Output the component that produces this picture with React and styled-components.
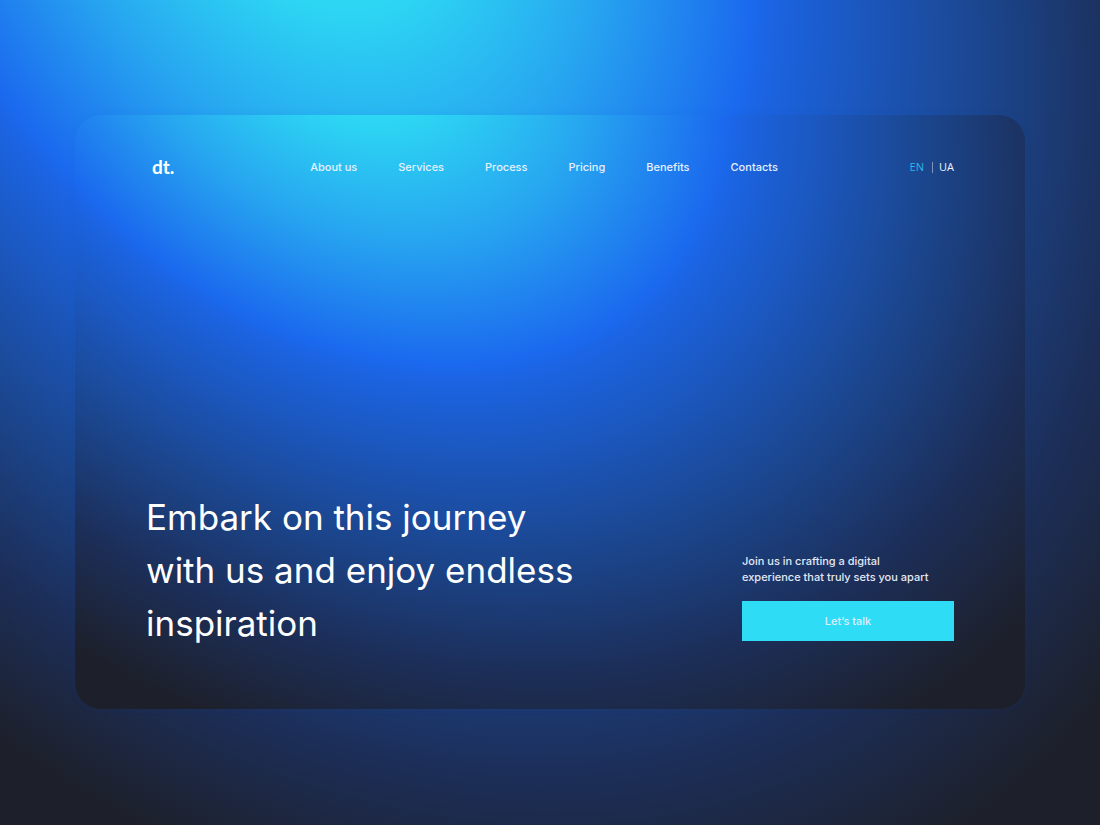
import React, { useId } from "react";
import styled, { createGlobalStyle } from "styled-components";

const GlobalStyle = createGlobalStyle`
  *, *::before, *::after { box-sizing: border-box; }
  body {
    margin: 0;
    background: #1d202a;
    color: #f4f6ff;
    font-family: Inter, "Open Sans", sans-serif;
  }
`;

const Page = styled.div`
  position: relative;
  display: flex;
  min-height: 100vh;
  padding: 115px 75px 116px;
`;

const GlowCanvas = styled.svg`
  position: absolute;
  inset: 0;
  z-index: 0;
  display: block;
  width: 100%;
  height: 100%;
`;

const Panel = styled.div`
  position: relative;
  flex: 1;
  display: flex;
  flex-direction: column;
  justify-content: space-between;
  gap: 64px;
  overflow: hidden;
  padding: 40px 71px 59px;
  border-radius: 26px;
  box-shadow: 0 0 8px rgba(27, 90, 210, 0.08);
`;

const Header = styled.header`
  position: relative;
  z-index: 1;
  display: flex;
  align-items: center;
  justify-content: space-between;
  flex-wrap: wrap;
  gap: 16px;
`;

const Logo = styled.a`
  padding: 0 4px 0 6px;
  color: #ffffff;
  font-family: Lato, sans-serif;
  font-size: 19px;
  font-weight: 700;
  line-height: 24px;
  text-decoration: none;
`;

const Nav = styled.nav`
  display: flex;
  flex-wrap: wrap;
  gap: 8px 41px;
`;

const NavLink = styled.a`
  color: #e6f1ff;
  font-size: 11px;
  font-weight: 500;
  line-height: 16px;
  text-decoration: none;
`;

const Languages = styled.div`
  display: flex;
  align-items: center;
`;

const Language = styled.button`
  padding: 0;
  border: 0;
  background: none;
  color: ${({ $active }) => ($active ? "#2bb9e4" : "#eef2fb")};
  font: 500 11px/16px "Open Sans", sans-serif;
  cursor: pointer;

  & + & {
    margin-left: 8px;
    padding-left: 7px;
    background: linear-gradient(#7f93bd, #7f93bd) left center / 1px 11px no-repeat;
  }
`;

const Hero = styled.main`
  position: relative;
  z-index: 1;
  display: flex;
  flex-wrap: wrap;
  align-items: flex-end;
  justify-content: space-between;
  gap: 32px;
`;

const Title = styled.h1`
  flex: 0 1 440px;
  margin: 0;
  color: #ffffff;
  font-size: 35px;
  font-weight: 400;
  line-height: 53px;
`;

const CallToAction = styled.section`
  flex: 0 0 212px;
  padding-bottom: 9px;
`;

const Lead = styled.p`
  margin: 0 0 16px;
  color: #e3e8f5;
  font-size: 11px;
  font-weight: 500;
  line-height: 16px;
`;

const TalkButton = styled.button`
  display: block;
  width: 100%;
  height: 40px;
  padding: 0;
  border: 0;
  background: #2fdcf5;
  color: #dcefff;
  font: 500 11px/16px Inter, sans-serif;
  cursor: pointer;
`;

function Glow() {
  const id = useId();
  return (
    <GlowCanvas viewBox="0 0 950 594" preserveAspectRatio="none" aria-hidden="true">
      <defs>
        <radialGradient
          id={id}
          gradientUnits="userSpaceOnUse"
          cx="0"
          cy="0"
          r="1"
          gradientTransform="translate(265 -115) rotate(40) scale(925 686)"
        >
          <stop offset="0.15" stopColor="#2dd7f3" />
          <stop offset="0.3" stopColor="#27a6f0" />
          <stop offset="0.46" stopColor="#1b69ee" />
          <stop offset="0.485" stopColor="#1b63e0" />
          <stop offset="0.7" stopColor="#1b468e" />
          <stop offset="0.85" stopColor="#1c2e58" />
          <stop offset="1" stopColor="#1d202a" />
        </radialGradient>
      </defs>
      <rect width="950" height="594" fill={`url(#${id})`} />
    </GlowCanvas>
  );
}

const links = ["About us", "Services", "Process", "Pricing", "Benefits", "Contacts"];

export default function App() {
  return (
    <>
      <GlobalStyle />
      <Page>
        <Glow />
        <Panel>
          <Glow />
          <Header>
            <Logo href="#home">dt.</Logo>
            <Nav aria-label="Main">
              {links.map((label) => (
                <NavLink key={label} href={`#${label.toLowerCase().replace(" ", "-")}`}>
                  {label}
                </NavLink>
              ))}
            </Nav>
            <Languages>
              <Language type="button" $active>EN</Language>
              <Language type="button">UA</Language>
            </Languages>
          </Header>
          <Hero>
            <Title>
              Embark on this journey
              <br />
              with us and enjoy endless
              <br />
              inspiration
            </Title>
            <CallToAction>
              <Lead>
                Join us in crafting a digital
                <br />
                experience that truly sets you apart
              </Lead>
              <TalkButton type="button">Let’s talk</TalkButton>
            </CallToAction>
          </Hero>
        </Panel>
      </Page>
    </>
  );
}
